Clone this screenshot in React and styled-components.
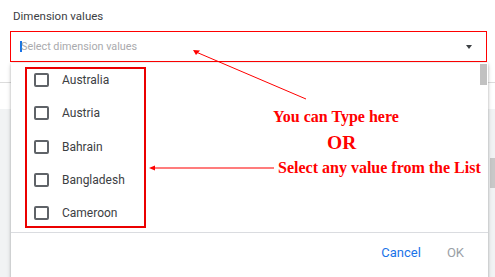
import React from "react";
import styled, { createGlobalStyle } from "styled-components";

const GlobalStyle = createGlobalStyle`
  html, body {
    margin: 0;
    padding: 0;
    background: #fff;
  }
  body {
    font-family: Roboto, "Liberation Sans", Arial, sans-serif;
  }
`;

const Page = styled.div`
  position: relative;
  width: 495px;
  height: 277px;
  overflow: hidden;
  background: #fff;
`;

const Header = styled.div`
  padding: 9px 8px 0 10px;
  width: 477px;
`;

const Label = styled.div`
  font-size: 11.5px;
  color: #3c4043;
  padding-left: 3px;
  height: 14px;
  line-height: 14px;
`;

const Field = styled.div`
  margin-top: 8px;
  height: 29px;
  border: 1px solid #ff0000;
  display: flex;
  align-items: center;
  padding: 0 14px 0 9px;
`;

const Caret = styled.span`
  width: 2px;
  height: 11px;
  background: #1a73e8;
`;

const Placeholder = styled.span`
  flex: 1;
  font-size: 10.8px;
  color: #a9aaad;
  margin-left: -1px;
`;

const Arrow = styled.span`
  width: 0;
  height: 0;
  border-left: 3.5px solid transparent;
  border-right: 3.5px solid transparent;
  border-top: 4px solid #3c4043;
`;

/* content lying behind the open dropdown */
const Backdrop = styled.div`
  display: flex;
  flex-direction: column;
`;

const BackRow = styled.div`
  height: 20px;
  border-bottom: 1px solid #dcdcdc;
`;

const BackPanel = styled.div`
  margin-top: 26px;
  height: 170px;
  background: #f1f3f4;
`;

const PageThumb = styled.div`
  position: absolute;
  right: 0;
  top: 158px;
  width: 5px;
  height: 30px;
  background: #c8c8c8;
`;

const Menu = styled.div`
  position: absolute;
  left: 11px;
  top: 63px;
  width: 477px;
  height: 240px;
  background: #fff;
  box-shadow: 0 2px 4px rgba(0, 0, 0, 0.25), 0 0 2px rgba(0, 0, 0, 0.12);
  display: flex;
  flex-direction: column;
`;

const MenuBody = styled.div`
  display: flex;
  height: 169px;
  border-bottom: 1px solid #dadce0;
`;

const List = styled.ul`
  list-style: none;
  margin: 0;
  padding: 0.5px 0 0 23px;
  flex: 1;
`;

const Item = styled.li`
  display: flex;
  align-items: center;
  gap: 13px;
  height: 33.3px;
  font-size: 12px;
  color: #3c4043;
`;

const Check = styled.span`
  box-sizing: border-box;
  width: 15px;
  height: 14px;
  border: 2px solid #5f6368;
  border-radius: 2px;
`;

const Track = styled.div`
  width: 8px;
  padding-top: 1px;
`;

const Thumb = styled.div`
  width: 7px;
  height: 21px;
  background: #c1c1c1;
`;

const Footer = styled.div`
  display: flex;
  justify-content: flex-end;
  align-items: center;
  gap: 26px;
  padding: 12px 24px 0 0;
`;

const Button = styled.button`
  border: 0;
  background: none;
  padding: 0;
  font-family: inherit;
  font-size: 13px;
  color: ${(p) => (p.$disabled ? "#9aa0a6" : "#1a73e8")};
`;

/* red annotation marks drawn over the screenshot */
const Frame = styled.div`
  position: absolute;
  left: 25px;
  top: 67px;
  width: 121px;
  height: 161px;
  box-sizing: border-box;
  border: 2px solid rgb(235, 0, 0);
`;

const Note = styled.div`
  position: absolute;
  left: ${(p) => p.$x}px;
  top: ${(p) => p.$y}px;
  font-family: "Liberation Serif", "Times New Roman", serif;
  font-weight: bold;
  font-size: ${(p) => p.$size}px;
  color: #ff0000;
  white-space: nowrap;
  line-height: 1;
`;

const Overlay = styled.svg`
  position: absolute;
  left: 0;
  top: 0;
  pointer-events: none;
`;

const countries = ["Australia", "Austria", "Bahrain", "Bangladesh", "Cameroon"];

export default function App() {
  return (
    <Page>
      <GlobalStyle />
      <Header>
        <Label>Dimension values</Label>
        <Field>
          <Caret />
          <Placeholder>Select dimension values</Placeholder>
          <Arrow />
        </Field>
      </Header>
      <Backdrop>
        <BackRow />
        <BackPanel />
      </Backdrop>
      <PageThumb />

      <Menu>
        <MenuBody>
          <List>
            {countries.map((c) => (
              <Item key={c}>
                <Check />
                {c}
              </Item>
            ))}
          </List>
          <Track>
            <Thumb />
          </Track>
        </MenuBody>
        <Footer>
          <Button>Cancel</Button>
          <Button $disabled>OK</Button>
        </Footer>
      </Menu>

      <Frame />
      <Note $x={273} $y={109} $size={16}>You can Type here</Note>
      <Note $x={327} $y={133} $size={19.5}>OR</Note>
      <Note $x={278} $y={160} $size={16}>Select any value from the List</Note>

      <Overlay width="495" height="277" viewBox="0 0 495 277">
        <line x1="306" y1="99" x2="196" y2="52" stroke="#ff0000" strokeWidth="1" />
        <polygon points="193,50 200,50.5 196,55" fill="#ff0000" />
        <line x1="274" y1="168" x2="153" y2="168" stroke="#ff5050" strokeWidth="1.5" />
        <polygon points="149,168 155,165.5 155,170.5" fill="#ff0000" />
      </Overlay>
    </Page>
  );
}
